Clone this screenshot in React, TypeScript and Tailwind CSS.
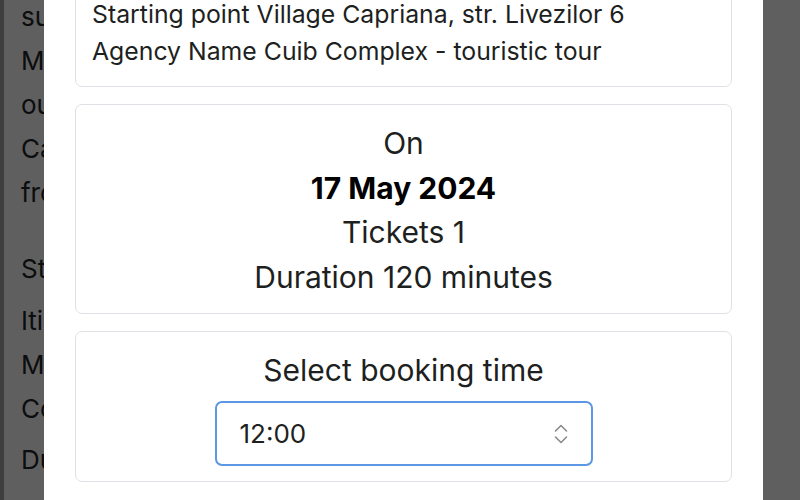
import { useState } from 'react';

const bgLines = [
    { text: 'surrounded by green hills and old forests', cls: '' },
    { text: 'Monastery of Capriana is one of the oldest', cls: '' },
    { text: 'outside the city, a quiet place for walks', cls: '' },
    { text: 'Capriana village welcomes every visitor', cls: '' },
    { text: 'from all over the country and abroad.', cls: '' },
    { text: 'Starting point Village Capriana', cls: 'mt-[32px]' },
    { text: 'Itinerary Chisinau - Capriana', cls: 'mt-[8px]' },
    { text: 'Meeting place near the monastery', cls: '' },
    { text: 'Cost per ticket included', cls: '' },
    { text: 'Duration 120 minutes', cls: 'mt-[7px]' },
];

export default function App() {
    const [time, setTime] = useState('12:00');

    return (
        <div
            className="relative h-[500px] w-[800px] overflow-hidden bg-white text-[#212529]"
            style={{ fontFamily: 'Inter, "Noto Sans", sans-serif' }}
        >
            {/* page behind the modal */}
            <div className="flex h-full">
                <div className="w-[4px] shrink-0 bg-[#a4a8a6]" />
                <div className="w-[40px] overflow-hidden">
                    <div className="-mt-[5px] flex flex-col pl-[17px] text-[26px] leading-[44px] whitespace-nowrap">
                        {bgLines.map((l) => (
                            <div key={l.text} className={l.cls}>
                                {l.text}
                            </div>
                        ))}
                    </div>
                </div>
            </div>

            {/* backdrop */}
            <div className="absolute inset-0 bg-[#000000a0]" />

            {/* modal */}
            <div className="absolute -top-[21px] bottom-0 left-[44px] w-[719px] bg-white px-[31px]">
                <div className="flex flex-col gap-[17px] text-[#1d1f21]">
                    <div className="rounded-[7px] border border-[#dee2e6] px-[16px] pb-[16px] pt-[16px] text-[24.8px] leading-[37px]">
                        <div>Starting point Village Capriana, str. Livezilor 6</div>
                        <div>Agency Name Cuib Complex - touristic tour</div>
                    </div>

                    <div className="flex flex-col items-center rounded-[7px] border border-[#dee2e6] pb-[14px] pt-[16px] text-[30px] leading-[44.5px]">
                        <div>On</div>
                        <div className="font-bold text-black">17 May 2024</div>
                        <div>Tickets 1</div>
                        <div>Duration 120 minutes</div>
                    </div>

                    <div className="flex flex-col items-center gap-[8px] rounded-[7px] border border-[#dee2e6] pb-[15px] pt-[16px]">
                        <div className="text-[30px] leading-[44.5px]">Select booking time</div>
                        <div className="relative w-[378px]">
                            <select
                                value={time}
                                onChange={(e) => setTime(e.target.value)}
                                className="h-[65px] w-full appearance-none rounded-[7px] border-2 border-[#5b97e4] bg-white pl-[23px] text-[26px] text-[#1d1f21] outline-none"
                            >
                                <option>10:00</option>
                                <option>12:00</option>
                                <option>14:00</option>
                                <option>16:00</option>
                            </select>
                            <svg
                                className="pointer-events-none absolute right-[24px] top-[22px]"
                                width="16"
                                height="22"
                                viewBox="0 0 16 22"
                                fill="none"
                                stroke="#8a8a8a"
                                strokeWidth="1.6"
                                strokeLinecap="round"
                                strokeLinejoin="round"
                            >
                                <path d="M2.5 8 L8 2.5 L13.5 8" />
                                <path d="M2.5 14 L8 19.5 L13.5 14" />
                            </svg>
                        </div>
                    </div>
                </div>
            </div>
        </div>
    );
}
